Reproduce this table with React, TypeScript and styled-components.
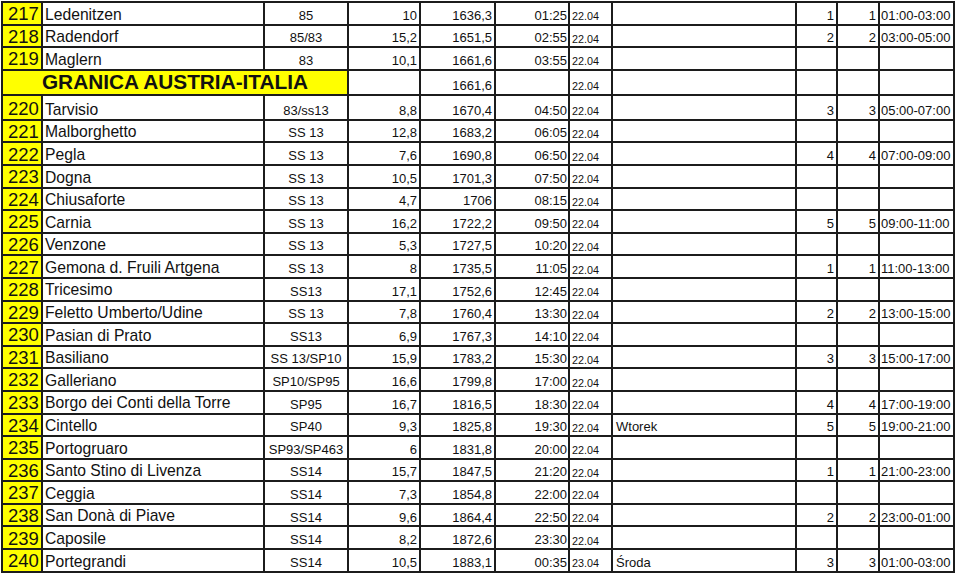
import React from 'react'
import styled, { createGlobalStyle } from 'styled-components'

const GlobalStyle = createGlobalStyle`
  html, body {
    margin: 0;
    padding: 0;
    background: #ffffff;
  }
  body {
    font-family: "Liberation Sans", Arial, sans-serif;
    color: #111;
  }
`

const Page = styled.div`
  padding: 1px 0 0 1px;
`

const Table = styled.table`
  border-collapse: collapse;
  table-layout: fixed;
  width: 952px;
`

const Row = styled.tr<{ $tall?: boolean }>`
  height: ${p => (p.$tall ? '25px' : '22.6px')};
`

type Align = 'left' | 'right' | 'center'

const Cell = styled.td<{ $align?: Align; $size?: number; $pad?: number }>`
  border: 2px solid #1c1c1c;
  padding: 0 ${p => p.$pad ?? 2}px 0 ${p => p.$pad ?? 2}px;
  text-align: ${p => p.$align ?? 'left'};
  vertical-align: bottom;
  font-size: ${p => p.$size ?? 13}px;
  line-height: 1.15;
  white-space: nowrap;
  overflow: hidden;
`

const NumCell = styled(Cell)`
  background: #ffff00;
  font-size: 18.5px;
  line-height: 1.05;
  padding-left: 5px;
`

const NameCell = styled(Cell)`
  font-size: 15.7px;
  padding-left: 2px;
`

const DateCell = styled(Cell)`
  font-size: 10.8px;
  padding-left: 2px;
  padding-bottom: 1px;
`

const BorderCell = styled(Cell)`
  background: #ffff00;
  font-weight: bold;
  font-size: 20.8px;
  line-height: 1.1;
  text-align: center;
`

type Stage = {
  no: number
  name: string
  road: string
  km: string
  total: string
  time: string
  date: string
  day?: string
  a?: string
  b?: string
  range?: string
}

const before: Stage[] = [
  { no: 217, name: 'Ledenitzen', road: '85', km: '10', total: '1636,3', time: '01:25', date: '22.04', a: '1', b: '1', range: '01:00-03:00' },
  { no: 218, name: 'Radendorf', road: '85/83', km: '15,2', total: '1651,5', time: '02:55', date: '22.04', a: '2', b: '2', range: '03:00-05:00' },
  { no: 219, name: 'Maglern', road: '83', km: '10,1', total: '1661,6', time: '03:55', date: '22.04' },
]

const after: Stage[] = [
  { no: 220, name: 'Tarvisio', road: '83/ss13', km: '8,8', total: '1670,4', time: '04:50', date: '22.04', a: '3', b: '3', range: '05:00-07:00' },
  { no: 221, name: 'Malborghetto', road: 'SS 13', km: '12,8', total: '1683,2', time: '06:05', date: '22.04' },
  { no: 222, name: 'Pegla', road: 'SS 13', km: '7,6', total: '1690,8', time: '06:50', date: '22.04', a: '4', b: '4', range: '07:00-09:00' },
  { no: 223, name: 'Dogna', road: 'SS 13', km: '10,5', total: '1701,3', time: '07:50', date: '22.04' },
  { no: 224, name: 'Chiusaforte', road: 'SS 13', km: '4,7', total: '1706', time: '08:15', date: '22.04' },
  { no: 225, name: 'Carnia', road: 'SS 13', km: '16,2', total: '1722,2', time: '09:50', date: '22.04', a: '5', b: '5', range: '09:00-11:00' },
  { no: 226, name: 'Venzone', road: 'SS 13', km: '5,3', total: '1727,5', time: '10:20', date: '22.04' },
  { no: 227, name: 'Gemona d. Fruili Artgena', road: 'SS 13', km: '8', total: '1735,5', time: '11:05', date: '22.04', a: '1', b: '1', range: '11:00-13:00' },
  { no: 228, name: 'Tricesimo', road: 'SS13', km: '17,1', total: '1752,6', time: '12:45', date: '22.04' },
  { no: 229, name: 'Feletto Umberto/Udine', road: 'SS 13', km: '7,8', total: '1760,4', time: '13:30', date: '22.04', a: '2', b: '2', range: '13:00-15:00' },
  { no: 230, name: 'Pasian di Prato', road: 'SS13', km: '6,9', total: '1767,3', time: '14:10', date: '22.04' },
  { no: 231, name: 'Basiliano', road: 'SS 13/SP10', km: '15,9', total: '1783,2', time: '15:30', date: '22.04', a: '3', b: '3', range: '15:00-17:00' },
  { no: 232, name: 'Galleriano', road: 'SP10/SP95', km: '16,6', total: '1799,8', time: '17:00', date: '22.04' },
  { no: 233, name: 'Borgo dei Conti della Torre', road: 'SP95', km: '16,7', total: '1816,5', time: '18:30', date: '22.04', a: '4', b: '4', range: '17:00-19:00' },
  { no: 234, name: 'Cintello', road: 'SP40', km: '9,3', total: '1825,8', time: '19:30', date: '22.04', day: 'Wtorek', a: '5', b: '5', range: '19:00-21:00' },
  { no: 235, name: 'Portogruaro', road: 'SP93/SP463', km: '6', total: '1831,8', time: '20:00', date: '22.04' },
  { no: 236, name: 'Santo Stino di Livenza', road: 'SS14', km: '15,7', total: '1847,5', time: '21:20', date: '22.04', a: '1', b: '1', range: '21:00-23:00' },
  { no: 237, name: 'Ceggia', road: 'SS14', km: '7,3', total: '1854,8', time: '22:00', date: '22.04' },
  { no: 238, name: 'San Donà di Piave', road: 'SS14', km: '9,6', total: '1864,4', time: '22:50', date: '22.04', a: '2', b: '2', range: '23:00-01:00' },
  { no: 239, name: 'Caposile', road: 'SS14', km: '8,2', total: '1872,6', time: '23:30', date: '22.04' },
  { no: 240, name: 'Portegrandi', road: 'SS14', km: '10,5', total: '1883,1', time: '00:35', date: '23.04', day: 'Środa', a: '3', b: '3', range: '01:00-03:00' },
]

const StageRow = ({ s, tall }: { s: Stage; tall?: boolean }) => (
  <Row $tall={tall}>
    <NumCell>{s.no}</NumCell>
    <NameCell>{s.name}</NameCell>
    <Cell $align="center" $size={13}>{s.road}</Cell>
    <Cell $align="right">{s.km}</Cell>
    <Cell $align="right">{s.total}</Cell>
    <Cell $align="right" $pad={1}>{s.time}</Cell>
    <DateCell>{s.date}</DateCell>
    <Cell $pad={3}>{s.day}</Cell>
    <Cell $align="right">{s.a}</Cell>
    <Cell $align="right">{s.b}</Cell>
    <Cell $pad={1}>{s.range}</Cell>
  </Row>
)

const widths = [40, 222, 84, 72, 75, 74, 43, 184, 41, 42, 75]

export default function App() {
  return (
    <Page>
      <GlobalStyle />
      <Table>
        <colgroup>
          {widths.map((w, i) => (
            <col key={i} style={{ width: w }} />
          ))}
        </colgroup>
        <tbody>
          {before.map(s => (
            <StageRow key={s.no} s={s} />
          ))}
          <Row $tall>
            <BorderCell colSpan={3}>GRANICA AUSTRIA-ITALIA</BorderCell>
            <Cell />
            <Cell $align="right">1661,6</Cell>
            <Cell />
            <DateCell>22.04</DateCell>
            <Cell />
            <Cell />
            <Cell />
            <Cell />
          </Row>
          {after.map((s, i) => (
            <StageRow key={s.no} s={s} tall={i === 0} />
          ))}
        </tbody>
      </Table>
    </Page>
  )
}
